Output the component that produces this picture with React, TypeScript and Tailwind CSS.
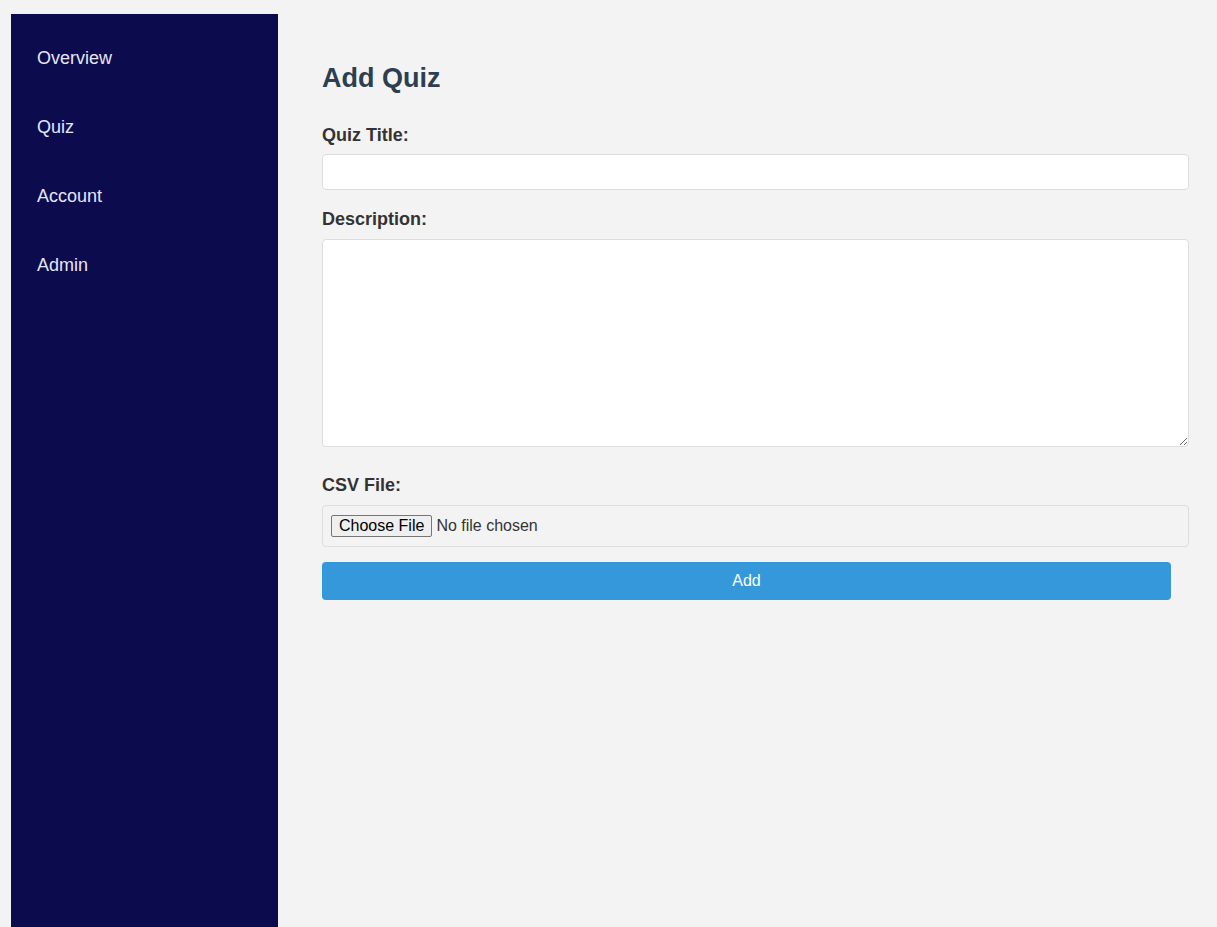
import React from "react";

const navItems = ["Overview", "Quiz", "Account", "Admin"];

const Sidebar = () => (
	<aside className="ml-[11px] mt-[14px] w-[267px] shrink-0 bg-[#0b0b4e] px-[26px] pt-[34px]">
		<ul className="flex flex-col gap-[48px]">
			{navItems.map((item) => (
				<li key={item}>
					<a href="#" className="block text-[18px] leading-[21px] text-[#e6e6f5]">
						{item}
					</a>
				</li>
			))}
		</ul>
	</aside>
);

const AddQuizForm = () => (
	<main className="flex-1 pl-[44px] pt-[62px]">
		<form className="flex w-[849px] flex-col" onSubmit={(e) => e.preventDefault()}>
			<h1 className="text-[27px] font-bold leading-[32px] text-[#2c3e50]">Add Quiz</h1>

			<label htmlFor="title" className="mt-[31px] mb-[8px] text-[18px] font-bold leading-[21px] text-[#333]">
				Quiz Title:
			</label>
			<input
				id="title"
				type="text"
				className="box-content h-[18px] w-full rounded-[4px] border border-[#ddd] bg-white p-[8px] text-[16px] text-[#333] outline-none"
			/>

			<label htmlFor="description" className="mt-[19px] mb-[9px] text-[18px] font-bold leading-[21px] text-[#333]">
				Description:
			</label>
			<textarea
				id="description"
				className="box-content block h-[190px] w-full rounded-[4px] border border-[#ddd] bg-white p-[8px] text-[16px] text-[#333] outline-none"
			/>

			<label htmlFor="csv" className="mt-[28px] mb-[9px] text-[18px] font-bold leading-[21px] text-[#333]">
				CSV File:
			</label>
			<div className="box-content flex h-[24px] w-full items-center rounded-[4px] border border-[#ddd] p-[8px]">
				<input
					id="csv"
					type="file"
					accept=".csv"
					className="text-[16px] leading-[18px] text-[#333] file:mr-[4px] file:rounded-[2px] file:border file:border-[#767676] file:bg-[#efefef] file:px-[7px] file:py-[1px] file:text-black"
				/>
			</div>

			<button
				type="submit"
				className="mt-[15px] h-[38px] w-full rounded-[4px] bg-[#3498db] text-[16px] text-white"
			>
				Add
			</button>
		</form>
	</main>
);

export default function App() {
	return (
		<div className="flex min-h-screen bg-[#f3f3f3] font-['Liberation_Sans',Arial,sans-serif]">
			<Sidebar />
			<AddQuizForm />
		</div>
	);
}
